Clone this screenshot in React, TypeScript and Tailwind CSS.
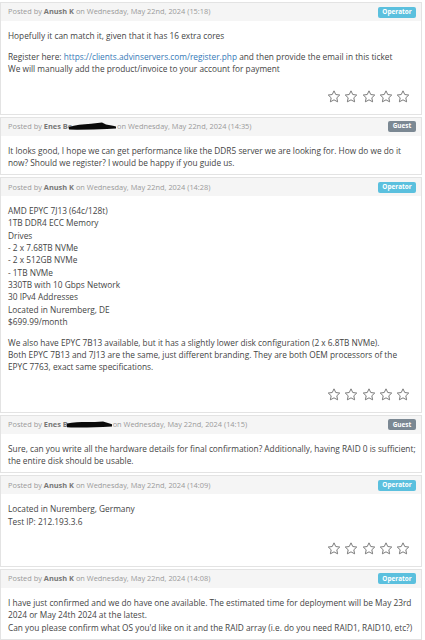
import React from "react";

type Seg = string | { link: string };
type Msg = {
  name: string;
  redact?: number;
  date: string;
  role: "Operator" | "Guest";
  paras: Seg[][][];
  stars: boolean;
};

const msgs: Msg[] = [
  {
    name: "Anush K",
    date: "Wednesday, May 22nd, 2024 (15:18)",
    role: "Operator",
    stars: true,
    paras: [
      [["Hopefully it can match it, given that it has 16 extra cores"]],
      [
        ["Register here: ", { link: "https://clients.advinservers.com/register.php" }, " and then provide the email in this ticket"],
        ["We will manually add the product/invoice to your account for payment"],
      ],
    ],
  },
  {
    name: "Enes Be",
    redact: 1,
    date: "Wednesday, May 22nd, 2024 (14:35)",
    role: "Guest",
    stars: false,
    paras: [
      [
        ["It looks good, I hope we can get performance like the DDR5 server we are looking for. How do we do it"],
        ["now? Should we register? I would be happy if you guide us."],
      ],
    ],
  },
  {
    name: "Anush K",
    date: "Wednesday, May 22nd, 2024 (14:28)",
    role: "Operator",
    stars: true,
    paras: [
      [
        ["AMD EPYC 7J13 (64c/128t)"],
        ["1TB DDR4 ECC Memory"],
        ["Drives"],
        ["- 2 x 7.68TB NVMe"],
        ["- 2 x 512GB NVMe"],
        ["- 1TB NVMe"],
        ["330TB with 10 Gbps Network"],
        ["30 IPv4 Addresses"],
        ["Located in Nuremberg, DE"],
        ["$699.99/month"],
      ],
      [
        ["We also have EPYC 7B13 available, but it has a slightly lower disk configuration (2 x 6.8TB NVMe)."],
        ["Both EPYC 7B13 and 7J13 are the same, just different branding. They are both OEM processors of the"],
        ["EPYC 7763, exact same specifications."],
      ],
    ],
  },
  {
    name: "Enes B",
    redact: 2,
    date: "Wednesday, May 22nd, 2024 (14:15)",
    role: "Guest",
    stars: false,
    paras: [
      [
        ["Sure, can you write all the hardware details for final confirmation? Additionally, having RAID 0 is sufficient;"],
        ["the entire disk should be usable."],
      ],
    ],
  },
  {
    name: "Anush K",
    date: "Wednesday, May 22nd, 2024 (14:09)",
    role: "Operator",
    stars: true,
    paras: [[["Located in Nuremberg, Germany"], ["Test IP: 212.193.3.6"]]],
  },
  {
    name: "Anush K",
    date: "Wednesday, May 22nd, 2024 (14:08)",
    role: "Operator",
    stars: false,
    paras: [
      [
        ["I have just confirmed and we do have one available. The estimated time for deployment will be May 23rd"],
        ["2024 or May 24th 2024 at the latest."],
        ["Can you please confirm what OS you'd like on it and the RAID array (i.e. do you need RAID1, RAID10, etc?)"],
      ],
    ],
  },
];

function StarIcon() {
  return (
    <svg width="14" height="13" viewBox="0 0 24 23" fill="none" stroke="#767676" strokeWidth="1.7" strokeLinejoin="miter">
      <polygon points="12,1.5 15.1,8 22.2,8.9 17,13.8 18.4,20.9 12,17.4 5.6,20.9 7,13.8 1.8,8.9 8.9,8" />
    </svg>
  );
}

function Redaction({ kind }: { kind: number }) {
  if (kind === 1) {
    return (
      <span className="relative inline-block w-[43px] h-[8px] align-middle">
        <svg className="absolute left-[-3px] top-[-1px]" width="48" height="10" viewBox="0 0 48 10">
          <path d="M0,5 C6,3 14,2.5 22,1.8 L33,0.6 L37,2.6 L44,3.8 L47,4.6 L47,6.4 L38,7 L24,7.6 L8,7.8 L0,7.4 Z" fill="#0a0a0a" />
        </svg>
      </span>
    );
  }
  return (
    <span className="relative inline-block w-[43px] h-[8px] align-middle">
      <svg className="absolute left-[-1px] top-[-1px]" width="46" height="10" viewBox="0 0 46 10">
        <path d="M0,3.4 C8,2 18,1.8 28,2.1 L36,1.6 L41,3 L45,4.2 L45,6.4 L36,7 L20,7.4 L4,7.6 L0,7.2 Z" fill="#0a0a0a" />
      </svg>
    </span>
  );
}

function Badge({ role }: { role: "Operator" | "Guest" }) {
  if (role === "Operator") {
    return (
      <span className="inline-flex items-center justify-center h-[11px] w-[38px] rounded-[2px] bg-[#5bc0de] text-white text-[6.4px] font-bold leading-none">
        Operator
      </span>
    );
  }
  return (
    <span className="inline-flex items-center justify-center h-[11px] w-[28px] rounded-[2px] bg-[#7b8893] text-white text-[6.4px] font-bold leading-none">
      Guest
    </span>
  );
}

export default function App() {
  return (
    <div className="w-[425px] h-[640px] overflow-hidden bg-white pt-[2px] font-['Open_Sans',sans-serif]">
      {msgs.map((m, i) => (
        <div key={i} className="mr-[3px] mb-[2px] border border-[#e3e3e3]">
          <div className="flex items-center justify-between h-[18px] pl-[7px] pr-[5px] bg-[#f5f5f5] text-[7.4px] text-[#9a9a9a] whitespace-nowrap">
            <span className="flex items-center">
              <span>Posted by&nbsp;</span>
              <span className="font-bold text-[#777777]">{m.name}</span>
              {m.redact ? <Redaction kind={m.redact} /> : null}
              <span>&nbsp;on {m.date}</span>
            </span>
            <Badge role={m.role} />
          </div>
          <div className="pt-[9px] pb-[5px] pl-[7px] pr-[8px] text-[8.3px] leading-[12.3px] text-[#444444]">
            <div className="flex flex-col gap-[8.7px]">
              {m.paras.map((p, j) => (
                <div key={j}>
                  {p.map((line, k) => (
                    <div key={k} className="whitespace-nowrap">
                      {line.map((s, l) =>
                        typeof s === "string" ? (
                          <span key={l}>{s}</span>
                        ) : (
                          <span key={l} className="text-[#3479b7]">
                            {s.link}
                          </span>
                        )
                      )}
                    </div>
                  ))}
                </div>
              ))}
            </div>
            {m.stars ? (
              <div className="flex justify-end gap-[3.2px] mt-[14px] mb-[6px] pr-[3px]">
                <StarIcon />
                <StarIcon />
                <StarIcon />
                <StarIcon />
                <StarIcon />
              </div>
            ) : null}
          </div>
        </div>
      ))}
    </div>
  );
}
